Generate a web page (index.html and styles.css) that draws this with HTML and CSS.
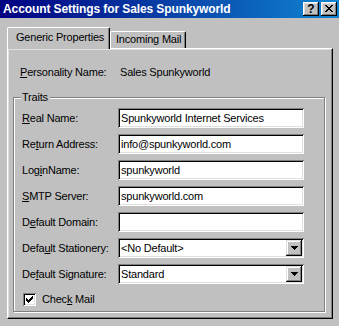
FILE: index.html
```html
<!DOCTYPE html>
<html>
<head>
<meta charset="utf-8">
<link rel="stylesheet" href="styles.css">
</head>
<body>
<div class="window">
  <div class="titlebar">
    <span class="title">Account Settings for Sales Spunkyworld</span>
    <div class="tbtns">
      <div class="tbtn q">?</div>
      <div class="tbtn">
        <svg width="8" height="7" viewBox="0 0 8 7" shape-rendering="crispEdges"><path d="M0 0h2v1h1v1h2v-1h1v-1h2v1h-1v1h-1v1h-1v1h1v1h1v1h1v1h-2v-1h-1v-1h-2v1h-1v1h-2v-1h1v-1h1v-1h1v-1h-1v-1h-1v-1h-1z" fill="#000"/></svg>
      </div>
    </div>
  </div>
  <div class="content">
    <div class="tabs">
      <div class="tab active">Generic Properties</div>
      <div class="tab">Incoming Mail</div>
    </div>
    <div class="panel">
      <div class="pname">
        <span class="plabel"><u>P</u>ersonality Name:</span>
        <span>Sales Spunkyworld</span>
      </div>
      <div class="group">
        <span class="legend">Traits</span>
        <div class="row"><span class="label"><u>R</u>eal Name:</span><div class="field">Spunkyworld Internet Services</div></div>
        <div class="row"><span class="label">Re<u>t</u>urn Address:</span><div class="field">info@spunkyworld.com</div></div>
        <div class="row"><span class="label">Log<u>i</u>nName:</span><div class="field">spunkyworld</div></div>
        <div class="row"><span class="label"><u>S</u>MTP Server:</span><div class="field">spunkyworld.com</div></div>
        <div class="row"><span class="label">D<u>e</u>fault Domain:</span><div class="field"></div></div>
        <div class="row"><span class="label">Defa<u>u</u>lt Stationery:</span><div class="field combo"><span>&lt;No Default&gt;</span><div class="dd"><svg width="7" height="4" viewBox="0 0 7 4" shape-rendering="crispEdges"><path d="M0 0h7v1h-1v1h-1v1h-1v1h-1v-1h-1v-1h-1v-1h-1z" fill="#000"/></svg></div></div></div>
        <div class="row"><span class="label">De<u>f</u>ault Signature:</span><div class="field combo"><span>Standard</span><div class="dd"><svg width="7" height="4" viewBox="0 0 7 4" shape-rendering="crispEdges"><path d="M0 0h7v1h-1v1h-1v1h-1v1h-1v-1h-1v-1h-1v-1h-1z" fill="#000"/></svg></div></div></div>
        <div class="check">
          <div class="box"><svg width="7" height="7" viewBox="0 0 7 7" shape-rendering="crispEdges"><path d="M6 0h1v3h-1v1h-1v1h-1v1h-1v1h-1v-1h-1v-1h-1v-3h1v1h1v1h1v-1h1v-1h1v-1h1z" fill="#000"/></svg></div>
          <span>Chec<u>k</u> Mail</span>
        </div>
      </div>
    </div>
  </div>
</div>
</body>
</html>
```
FILE: styles.css
```css
* { box-sizing: border-box; }
body {
  margin: 0;
  background: #c0c0c0;
  font-family: "Liberation Sans", Arial, sans-serif;
  font-size: 11px;
  letter-spacing: -0.2px;
  color: #000;
}
.window {
  width: 339px;
  height: 326px;
  background: #c0c0c0;
  display: flex;
  flex-direction: column;
  overflow: hidden;
}
.titlebar {
  height: 18px;
  flex: none;
  background: linear-gradient(90deg, #000080, #1084d0);
  display: flex;
  align-items: center;
  justify-content: space-between;
  padding: 0 2px 0 3px;
}
.title {
  color: #fff;
  font-weight: bold;
  font-size: 12px;
  letter-spacing: -0.1px;
  line-height: 14px;
}
.tbtns { display: flex; gap: 2px; }
.tbtn {
  width: 16px;
  height: 14px;
  background: #c0c0c0;
  box-shadow: inset -1px -1px #000, inset 1px 1px #fff, inset -2px -2px #808080, inset 2px 2px #dfdfdf;
  display: flex;
  align-items: center;
  justify-content: center;
  padding-bottom: 1px;
}
.tbtn.q {
  font-weight: bold;
  font-size: 12px;
  line-height: 12px;
  letter-spacing: 0;
}
.content {
  padding: 9px 6px 0 7px;
}
.tabs {
  display: flex;
  align-items: flex-end;
  height: 21px;
}
.tab {
  height: 17px;
  width: 76px;
  padding: 1px 0 0 5px;
  line-height: 13px;
  border-top: 1px solid #fff;
  border-left: 1px solid #fff;
  border-right: 1px solid #000;
  border-radius: 2px 2px 0 0;
  box-shadow: inset -1px 0 #808080;
  white-space: nowrap;
}
.tab.active {
  position: relative;
  z-index: 1;
  height: 22px;
  width: 103px;
  margin-bottom: -1px;
  padding: 3px 0 0 8px;
  background: #c0c0c0;
  border-right: 1px solid #000;
}
.panel {
  width: 326px;
  height: 271px;
  border: 1px solid;
  border-color: #fff #000 #000 #fff;
  box-shadow: inset -1px -1px #808080, inset 1px 1px #dfdfdf;
  padding: 17px 7px 0 5px;
}
.pname {
  display: flex;
  line-height: 13px;
  padding-left: 7px;
}
.plabel { width: 100px; }
.group {
  position: relative;
  margin-top: 18px;
  width: 312px;
  height: 215px;
  border: 1px solid #808080;
  box-shadow: 1px 1px 0 #fff, inset 1px 1px 0 #fff;
  padding: 10px 0 0 8px;
  display: flex;
  flex-direction: column;
  gap: 6px;
}
.legend {
  position: absolute;
  left: 7px;
  top: -7px;
  padding: 0 2px 0 1px;
  background: #c0c0c0;
  line-height: 13px;
}
.row {
  display: flex;
  align-items: center;
  height: 20px;
}
.label {
  width: 96px;
  line-height: 13px;
  white-space: nowrap;
}
.field {
  width: 186px;
  height: 20px;
  background: #fff;
  box-shadow: inset 1px 1px #808080, inset -1px -1px #fff, inset 2px 2px #000, inset -2px -2px #dfdfdf;
  padding: 0 0 0 3px;
  line-height: 20px;
  white-space: nowrap;
}
.combo {
  display: flex;
  justify-content: space-between;
  align-items: center;
  padding-right: 2px;
}
.dd {
  width: 16px;
  height: 16px;
  background: #c0c0c0;
  box-shadow: inset -1px -1px #000, inset 1px 1px #dfdfdf, inset -2px -2px #808080, inset 2px 2px #fff;
  display: flex;
  align-items: center;
  justify-content: center;
}
.check {
  display: flex;
  align-items: center;
  gap: 6px;
  margin-top: 3px;
  padding-left: 1px;
  line-height: 13px;
}
.box {
  width: 13px;
  height: 13px;
  background: #fff;
  box-shadow: inset 1px 1px #808080, inset -1px -1px #fff, inset 2px 2px #000, inset -2px -2px #dfdfdf;
  display: flex;
  align-items: center;
  justify-content: center;
}
```
